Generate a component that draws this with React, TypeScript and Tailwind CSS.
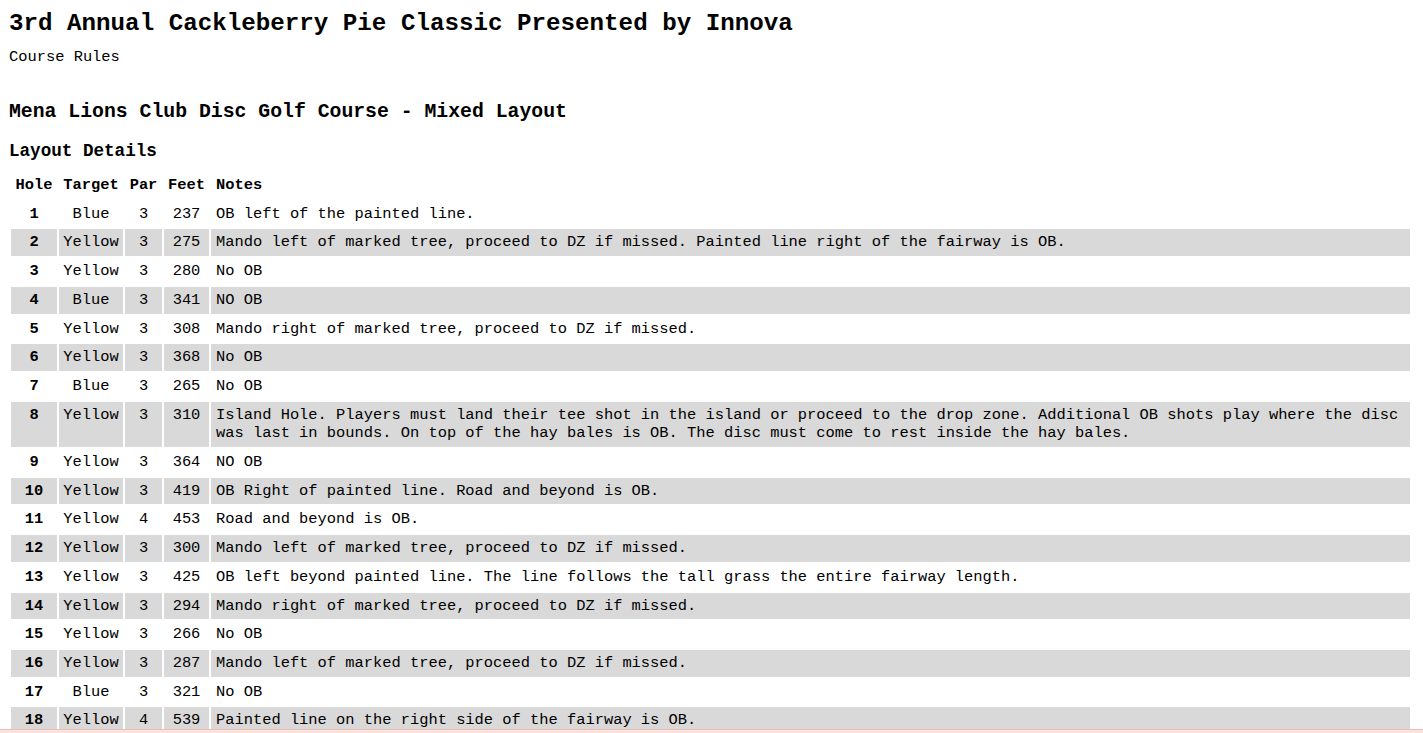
import React from "react";

const rows: [number, string, number, number, string][] = [
  [1, "Blue", 3, 237, "OB left of the painted line."],
  [2, "Yellow", 3, 275, "Mando left of marked tree, proceed to DZ if missed. Painted line right of the fairway is OB."],
  [3, "Yellow", 3, 280, "No OB"],
  [4, "Blue", 3, 341, "NO OB"],
  [5, "Yellow", 3, 308, "Mando right of marked tree, proceed to DZ if missed."],
  [6, "Yellow", 3, 368, "No OB"],
  [7, "Blue", 3, 265, "No OB"],
  [8, "Yellow", 3, 310, "Island Hole. Players must land their tee shot in the island or proceed to the drop zone. Additional OB shots play where the disc was last in bounds. On top of the hay bales is OB. The disc must come to rest inside the hay bales."],
  [9, "Yellow", 3, 364, "NO OB"],
  [10, "Yellow", 3, 419, "OB Right of painted line. Road and beyond is OB."],
  [11, "Yellow", 4, 453, "Road and beyond is OB."],
  [12, "Yellow", 3, 300, "Mando left of marked tree, proceed to DZ if missed."],
  [13, "Yellow", 3, 425, "OB left beyond painted line. The line follows the tall grass the entire fairway length."],
  [14, "Yellow", 3, 294, "Mando right of marked tree, proceed to DZ if missed."],
  [15, "Yellow", 3, 266, "No OB"],
  [16, "Yellow", 3, 287, "Mando left of marked tree, proceed to DZ if missed."],
  [17, "Blue", 3, 321, "No OB"],
  [18, "Yellow", 4, 539, "Painted line on the right side of the fairway is OB."],
];

export default function App() {
  return (
    <div
      className="min-h-[733px] bg-white text-black pl-[9px] pr-[11px] pt-[10px] text-[15.4px] leading-[18.7px]"
      style={{ fontFamily: '"Liberation Mono", "Courier New", monospace' }}
    >
      <h1 className="text-[24.2px] leading-[28px] font-bold h-[28px] whitespace-nowrap">
        3rd Annual Cackleberry Pie Classic Presented by Innova
      </h1>
      <div className="mt-[10px] text-[15.4px] leading-[18px]">Course Rules</div>
      <h2 className="mt-[34px] text-[19.8px] leading-[24px] font-bold">
        Mena Lions Club Disc Golf Course - Mixed Layout
      </h2>
      <h3 className="mt-[16px] text-[17.6px] leading-[22px] font-bold">Layout Details</h3>
      <table className="mt-[8px] w-full table-fixed border-separate border-spacing-[2px]">
        <colgroup>
          <col className="w-[46px]" />
          <col className="w-[64px]" />
          <col className="w-[37px]" />
          <col className="w-[45px]" />
          <col />
        </colgroup>
        <thead>
          <tr>
            <th className="py-[4px] text-center font-bold">Hole</th>
            <th className="py-[4px] text-center font-bold">Target</th>
            <th className="py-[4px] text-center font-bold">Par</th>
            <th className="py-[4px] text-center font-bold">Feet</th>
            <th className="px-[5px] py-[4px] text-left font-bold">Notes</th>
          </tr>
        </thead>
        <tbody>
          {rows.map(([hole, target, par, feet, notes], i) => {
            const bg = i % 2 === 1 ? "bg-[#d9d9d9]" : "bg-white";
            return (
              <tr key={hole}>
                <td className={`${bg} py-[4px] text-center align-top font-bold`}>{hole}</td>
                <td className={`${bg} py-[4px] text-center align-top`}>{target}</td>
                <td className={`${bg} py-[4px] text-center align-top`}>{par}</td>
                <td className={`${bg} py-[4px] text-center align-top`}>{feet}</td>
                <td className={`${bg} px-[5px] py-[4px] text-left align-top`}>{notes}</td>
              </tr>
            );
          })}
        </tbody>
      </table>
      <div className="fixed bottom-0 left-0 right-0 h-[4px] bg-[#f9e3dc] border-t border-[#e8c0b8]" />
    </div>
  );
}
